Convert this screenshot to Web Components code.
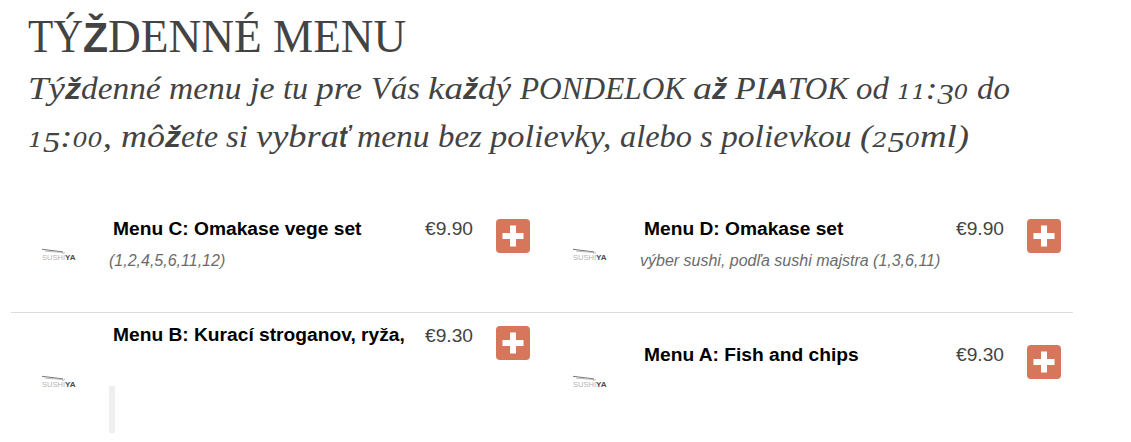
<!DOCTYPE html>
<html lang="sk">
<head>
<meta charset="utf-8">
<title>Týždenné menu</title>
<style>
  body {
    margin: 0;
    background: #fff;
    color: #434343;
    font-family: "Liberation Sans", Arial, sans-serif;
  }
</style>
</head>
<body>
<menu-page></menu-page>

<script>
const make = (html) => {
  const template = document.createElement('template');
  template.innerHTML = html;
  return template;
};

// inline run of text, stretched so that it takes the given width
class FitText extends HTMLElement {
  connectedCallback() {
    // no whitespace between the tags: it would be drawn, as the host is white-space: pre
    this.attachShadow({ mode: 'open' }).innerHTML =
      '<style>:host { display: inline-block; white-space: pre; transform-origin: 0 50%; }</style><slot></slot>';
    const width = Number(this.getAttribute('w'));
    const natural = this.getBoundingClientRect().width;
    this.style.marginRight = width - natural + 'px';
    this.style.transform = `scaleX(${width / natural})`;
  }
}

const headingTemplate = make(`
  <style>
    :host {
      display: block;
      padding: 12px 0 0 28px;
      font-family: Georgia, "Liberation Serif", serif;
    }
    h1, p { margin: 0; font-weight: 400; white-space: nowrap; }
    h1 { font-size: 45.5px; line-height: 50px; height: 53px; }
    p { height: 48px; font-size: 31.5px; line-height: 48px; font-style: italic; }
    b { font-family: "Liberation Sans", sans-serif; font-size: .93em; line-height: 0; }
    /* old-style figures */
    .lo, .de { line-height: 0; }
    .lo { font-family: "DejaVu Serif", serif; font-size: .65em; }
    .de { font-size: .94em; vertical-align: -.18em; }
  </style>
  <h1><fit-text w="55">TÝ</fit-text><fit-text w="25"><b>Ž</b></fit-text><fit-text w="165">DENNÉ </fit-text><fit-text w="133">MENU</fit-text></h1>
  <p><fit-text w="37">Tý</fit-text><fit-text w="16"><b>ž</b></fit-text><fit-text w="88">denné </fit-text><fit-text w="81">menu </fit-text><fit-text w="33">je </fit-text><fit-text w="33">tu </fit-text><fit-text w="55">pre </fit-text><fit-text w="57">Vás </fit-text><fit-text w="35">ka</fit-text><fit-text w="15"><b>ž</b></fit-text><fit-text w="42">dý </fit-text><fit-text w="173">PONDELOK </fit-text><fit-text w="19">a</fit-text><fit-text w="23"><b>ž</b> </fit-text><fit-text w="32">PI</fit-text><fit-text w="21"><b>A</b></fit-text><fit-text w="68">TOK </fit-text><fit-text w="41">od </fit-text><fit-text w="80"><span class="lo">11</span>:<span class="de">3</span><span class="lo">0</span> </fit-text><fit-text w="33">do</fit-text></p>
  <p><fit-text w="93"><span class="lo">1</span><span class="de">5</span>:<span class="lo">00</span>, </fit-text><fit-text w="44">mô</fit-text><fit-text w="16"><b>ž</b></fit-text><fit-text w="45">ete </fit-text><fit-text w="30">si </fit-text><fit-text w="83">vybra</fit-text><fit-text w="18"><b>ť</b> </fit-text><fit-text w="81">menu </fit-text><fit-text w="52">bez </fit-text><fit-text w="130">polievky, </fit-text><fit-text w="80">alebo </fit-text><fit-text w="21">s </fit-text><fit-text w="139">polievkou </fit-text><fit-text w="109">(<span class="lo">2</span><span class="de">5</span><span class="lo">0</span>ml)</fit-text></p>
`);

class MenuHeading extends HTMLElement {
  connectedCallback() {
    this.attachShadow({ mode: 'open' }).appendChild(headingTemplate.content.cloneNode(true));
  }
}

const logoTemplate = make(`
  <style>
    :host { display: block; width: 34px; height: 14px; }
    svg { display: block; }
    text { font-family: "Liberation Sans", sans-serif; font-size: 7.8px; }
  </style>
  <svg width="34" height="14" viewBox="0 0 34 14">
    <path d="M0 1.3L21 3.9" stroke="#777" stroke-width="1"/>
    <path d="M3 3.1L21 4.5" stroke="#aaa" stroke-width=".8"/>
    <path d="M20 5.4L23 4.6" stroke="#bbb" stroke-width="1"/>
    <text x="0" y="12.3" fill="#b4b4b4" textLength="23" lengthAdjust="spacingAndGlyphs">SUSHI</text>
    <text x="23" y="12.3" fill="#4c4c4c" font-weight="700" textLength="10.5" lengthAdjust="spacingAndGlyphs">YA</text>
  </svg>
`);

class SushiLogo extends HTMLElement {
  connectedCallback() {
    this.attachShadow({ mode: 'open' }).appendChild(logoTemplate.content.cloneNode(true));
  }
}

const addTemplate = make(`
  <style>
    :host { display: block; }
    button {
      display: block;
      width: 34px;
      height: 34px;
      padding: 0;
      border: 0;
      border-radius: 4px;
      background: #d6765a;
      cursor: pointer;
    }
    svg { display: block; }
  </style>
  <button type="button" aria-label="+">
    <svg width="34" height="34" viewBox="0 0 34 34"><path d="M14 6.5h6V14h7.5v6H20v7.5h-6V20H6.5v-6H14z" fill="#fff"/></svg>
  </button>
`);

class AddButton extends HTMLElement {
  connectedCallback() {
    this.attachShadow({ mode: 'open' }).appendChild(addTemplate.content.cloneNode(true));
  }
}

const itemTemplate = make(`
  <style>
    :host {
      display: grid;
      grid-template-columns: 67px 316px 71px 34px;
      align-items: start;
      box-sizing: border-box;
      padding-left: 31px;
      font-size: 19.2px;
      line-height: 22px;
    }
    sushi-logo { margin-top: var(--logo-top, 45px); }
    .text, .price, add-button { margin-top: var(--top, 15px); }
    .name {
      padding-left: 4px;
      color: #000;
      font-weight: 700;
      white-space: nowrap;
    }
    .note {
      margin-top: 11px;
      color: #6b6b6b;
      font-size: 16px;
      line-height: 20px;
      font-style: italic;
      white-space: nowrap;
    }
    .price { padding-top: var(--price-shift, 0px); }
    add-button { padding-top: var(--button-shift, 1px); }
  </style>
  <sushi-logo></sushi-logo>
  <div class="text">
    <div class="name"><slot name="name"></slot></div>
    <div class="note"><slot></slot></div>
  </div>
  <div class="price"><slot name="price"></slot></div>
  <add-button></add-button>
`);

class MenuItem extends HTMLElement {
  connectedCallback() {
    this.attachShadow({ mode: 'open' }).appendChild(itemTemplate.content.cloneNode(true));
  }
}

const pageTemplate = make(`
  <style>
    :host { display: block; height: 442px; overflow: hidden; }
    .row {
      display: grid;
      grid-template-columns: 531px 531px;
      width: 1062px;
      margin-left: 11px;
    }
    .first { height: 109px; margin-top: 42px; border-bottom: 1px solid #dcdcdc; }
    .left { --top: 11px; --logo-top: 62px; --price-shift: 1px; --button-shift: 2px; }
    .right { --top: 31px; --logo-top: 62px; }
    .quote { width: 6px; height: 47px; margin-top: 40px; background: #eee; }
  </style>
  <menu-heading></menu-heading>
  <div class="row first">
    <menu-item>
      <span slot="name">Menu C: Omakase vege set</span>
      <span slot="price">€9.90</span>
      <span>(1,2,4,5,6,11,12)</span>
    </menu-item>
    <menu-item>
      <span slot="name">Menu D: Omakase set</span>
      <span slot="price">€9.90</span>
      <span>výber sushi, podľa sushi majstra (1,3,6,11)</span>
    </menu-item>
  </div>
  <div class="row">
    <menu-item class="left">
      <span slot="name">Menu B: Kurací stroganov, ryža,</span>
      <span slot="price">€9.30</span>
      <div class="quote"></div>
    </menu-item>
    <menu-item class="right">
      <span slot="name">Menu A: Fish and chips</span>
      <span slot="price">€9.30</span>
    </menu-item>
  </div>
`);

class MenuPage extends HTMLElement {
  connectedCallback() {
    this.attachShadow({ mode: 'open' }).appendChild(pageTemplate.content.cloneNode(true));
  }
}

customElements.define('fit-text', FitText);
customElements.define('menu-heading', MenuHeading);
customElements.define('sushi-logo', SushiLogo);
customElements.define('add-button', AddButton);
customElements.define('menu-item', MenuItem);
customElements.define('menu-page', MenuPage);
</script>
</body>
</html>
